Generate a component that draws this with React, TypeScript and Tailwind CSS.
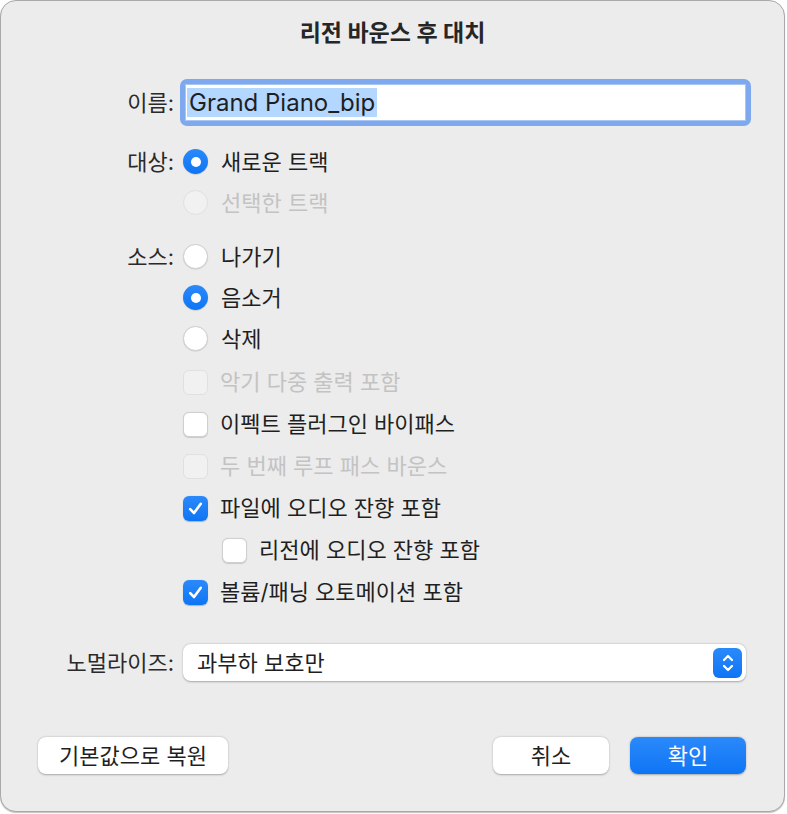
import React from "react";

const FONT = { fontFamily: '"Inter", "Noto Sans CJK KR", sans-serif' };

const Radio = ({ checked, disabled }: { checked?: boolean; disabled?: boolean }) => {
    if (checked) {
        return (
            <div className="w-[25px] h-[25px] rounded-full bg-gradient-to-b from-[#2a89fb] to-[#0c75f4] flex items-center justify-center shadow-[0_0.5px_1px_rgba(0,0,0,0.25)]">
                <div className="w-[10px] h-[10px] rounded-full bg-white" />
            </div>
        );
    }
    return (
        <div
            className={
                disabled
                    ? "w-[25px] h-[25px] rounded-full bg-[#f1f1f1] border border-[#e0e0e0]"
                    : "w-[25px] h-[25px] rounded-full bg-white border border-[#cfcfcf] shadow-[0_0.5px_1px_rgba(0,0,0,0.15)]"
            }
        />
    );
};

const Checkbox = ({ checked, disabled }: { checked?: boolean; disabled?: boolean }) => {
    if (checked) {
        return (
            <div className="w-[25px] h-[25px] rounded-[6px] bg-gradient-to-b from-[#2a89fb] to-[#0c75f4] flex items-center justify-center shadow-[0_0.5px_1px_rgba(0,0,0,0.25)]">
                <svg width="17" height="17" viewBox="0 0 17 17" fill="none">
                    <path d="M3.2 9.2 L7 13 L13.8 3.8" stroke="white" strokeWidth="2.6" strokeLinecap="round" strokeLinejoin="round" />
                </svg>
            </div>
        );
    }
    return (
        <div
            className={
                disabled
                    ? "w-[25px] h-[25px] rounded-[6px] bg-[#f1f1f1] border border-[#e0e0e0]"
                    : "w-[25px] h-[25px] rounded-[6px] bg-white border border-[#cfcfcf] shadow-[0_0.5px_1px_rgba(0,0,0,0.15)]"
            }
        />
    );
};

const Label = ({ children }: { children?: React.ReactNode }) => (
    <div className="w-[173px] shrink-0 text-right text-[#2a2a2a]">{children}</div>
);

const RadioRow = ({ label, text, checked, disabled }: { label?: string; text: string; checked?: boolean; disabled?: boolean }) => (
    <div className="flex items-center h-[41px]">
        <Label>{label}</Label>
        <div className="ml-[9px] flex items-center gap-[13px]">
            <Radio checked={checked} disabled={disabled} />
            <span className={disabled ? "text-[#c3c3c3]" : "text-[#1f1f1f]"}>{text}</span>
        </div>
    </div>
);

const CheckRow = ({ text, checked, disabled, indent }: { text: string; checked?: boolean; disabled?: boolean; indent?: boolean }) => (
    <div className="flex items-center h-[42px]">
        <Label />
        <div className={indent ? "ml-[48px] flex items-center gap-[12px]" : "ml-[9px] flex items-center gap-[12px]"}>
            <Checkbox checked={checked} disabled={disabled} />
            <span className={disabled ? "text-[#c3c3c3]" : "text-[#1f1f1f]"}>{text}</span>
        </div>
    </div>
);

export default function App() {
    return (
        <div className="w-[787px] h-[814px] bg-white" style={FONT}>
            <div className="w-[785px] h-[812px] rounded-[16px] border border-[#a9a9a9] bg-[#ececec] shadow-[0_1px_1px_rgba(0,0,0,0.25)] flex flex-col text-[22px] leading-[26px]">
                <div className="pt-[18px] text-center font-bold text-[23px] leading-[28px] text-[#262626]">리전 바운스 후 대치</div>

                {/* name field */}
                <div className="mt-[32px] flex items-center h-[47px]">
                    <Label>이름:</Label>
                    <div className="ml-[6px] w-[571px] h-[47px] rounded-[7px] bg-[#7ea9ef] p-[5px]">
                        <div className="w-full h-full bg-white border border-[#a9c6f3] flex items-center pl-[1px]">
                            <span className="bg-[#b3d7ff] text-[#1f1f1f] px-[2px] text-[24px] leading-[29px]">Grand Piano_bip</span>
                        </div>
                    </div>
                </div>

                <div className="mt-[15px]">
                    <RadioRow label="대상:" text="새로운 트랙" checked />
                    <RadioRow text="선택한 트랙" disabled />
                </div>

                <div className="mt-[13px]">
                    <RadioRow label="소스:" text="나가기" />
                    <RadioRow text="음소거" checked />
                    <RadioRow text="삭제" />
                </div>

                <div className="mt-[2px]">
                    <CheckRow text="악기 다중 출력 포함" disabled />
                    <CheckRow text="이펙트 플러그인 바이패스" />
                    <CheckRow text="두 번째 루프 패스 바운스" disabled />
                    <CheckRow text="파일에 오디오 잔향 포함" checked />
                    <CheckRow text="리전에 오디오 잔향 포함" indent />
                    <CheckRow text="볼륨/패닝 오토메이션 포함" checked />
                </div>

                {/* normalize select */}
                <div className="mt-[31px] flex items-center h-[37px]">
                    <Label>노멀라이즈:</Label>
                    <div className="ml-[9px] w-[563px] h-[37px] rounded-[8px] bg-white shadow-[0_0.5px_2px_rgba(0,0,0,0.3)] flex items-center justify-between pl-[14px] pr-[4px]">
                        <span className="text-[#1f1f1f]">과부하 보호만</span>
                        <div className="w-[29px] h-[30px] rounded-[6px] bg-gradient-to-b from-[#2a89fb] to-[#0c75f4] flex items-center justify-center">
                            <svg width="14" height="22" viewBox="0 0 14 22" fill="none">
                                <path d="M3 8 L7 4 L11 8" stroke="white" strokeWidth="2.2" strokeLinecap="round" strokeLinejoin="round" />
                                <path d="M3 14 L7 18 L11 14" stroke="white" strokeWidth="2.2" strokeLinecap="round" strokeLinejoin="round" />
                            </svg>
                        </div>
                    </div>
                </div>

                {/* buttons */}
                <div className="mt-[56px] flex items-center pl-[37px] pr-[38px]">
                    <button className="w-[190px] h-[37px] rounded-[8px] bg-white shadow-[0_0.5px_2px_rgba(0,0,0,0.3)] text-[#1f1f1f]">기본값으로 복원</button>
                    <div className="flex-1" />
                    <button className="w-[116px] h-[37px] rounded-[8px] bg-white shadow-[0_0.5px_2px_rgba(0,0,0,0.3)] text-[#1f1f1f]">취소</button>
                    <button className="ml-[21px] w-[116px] h-[37px] rounded-[8px] bg-gradient-to-b from-[#2a89fb] to-[#0c75f4] shadow-[0_0.5px_2px_rgba(0,0,0,0.3)] text-white">확인</button>
                </div>
            </div>
        </div>
    );
}
